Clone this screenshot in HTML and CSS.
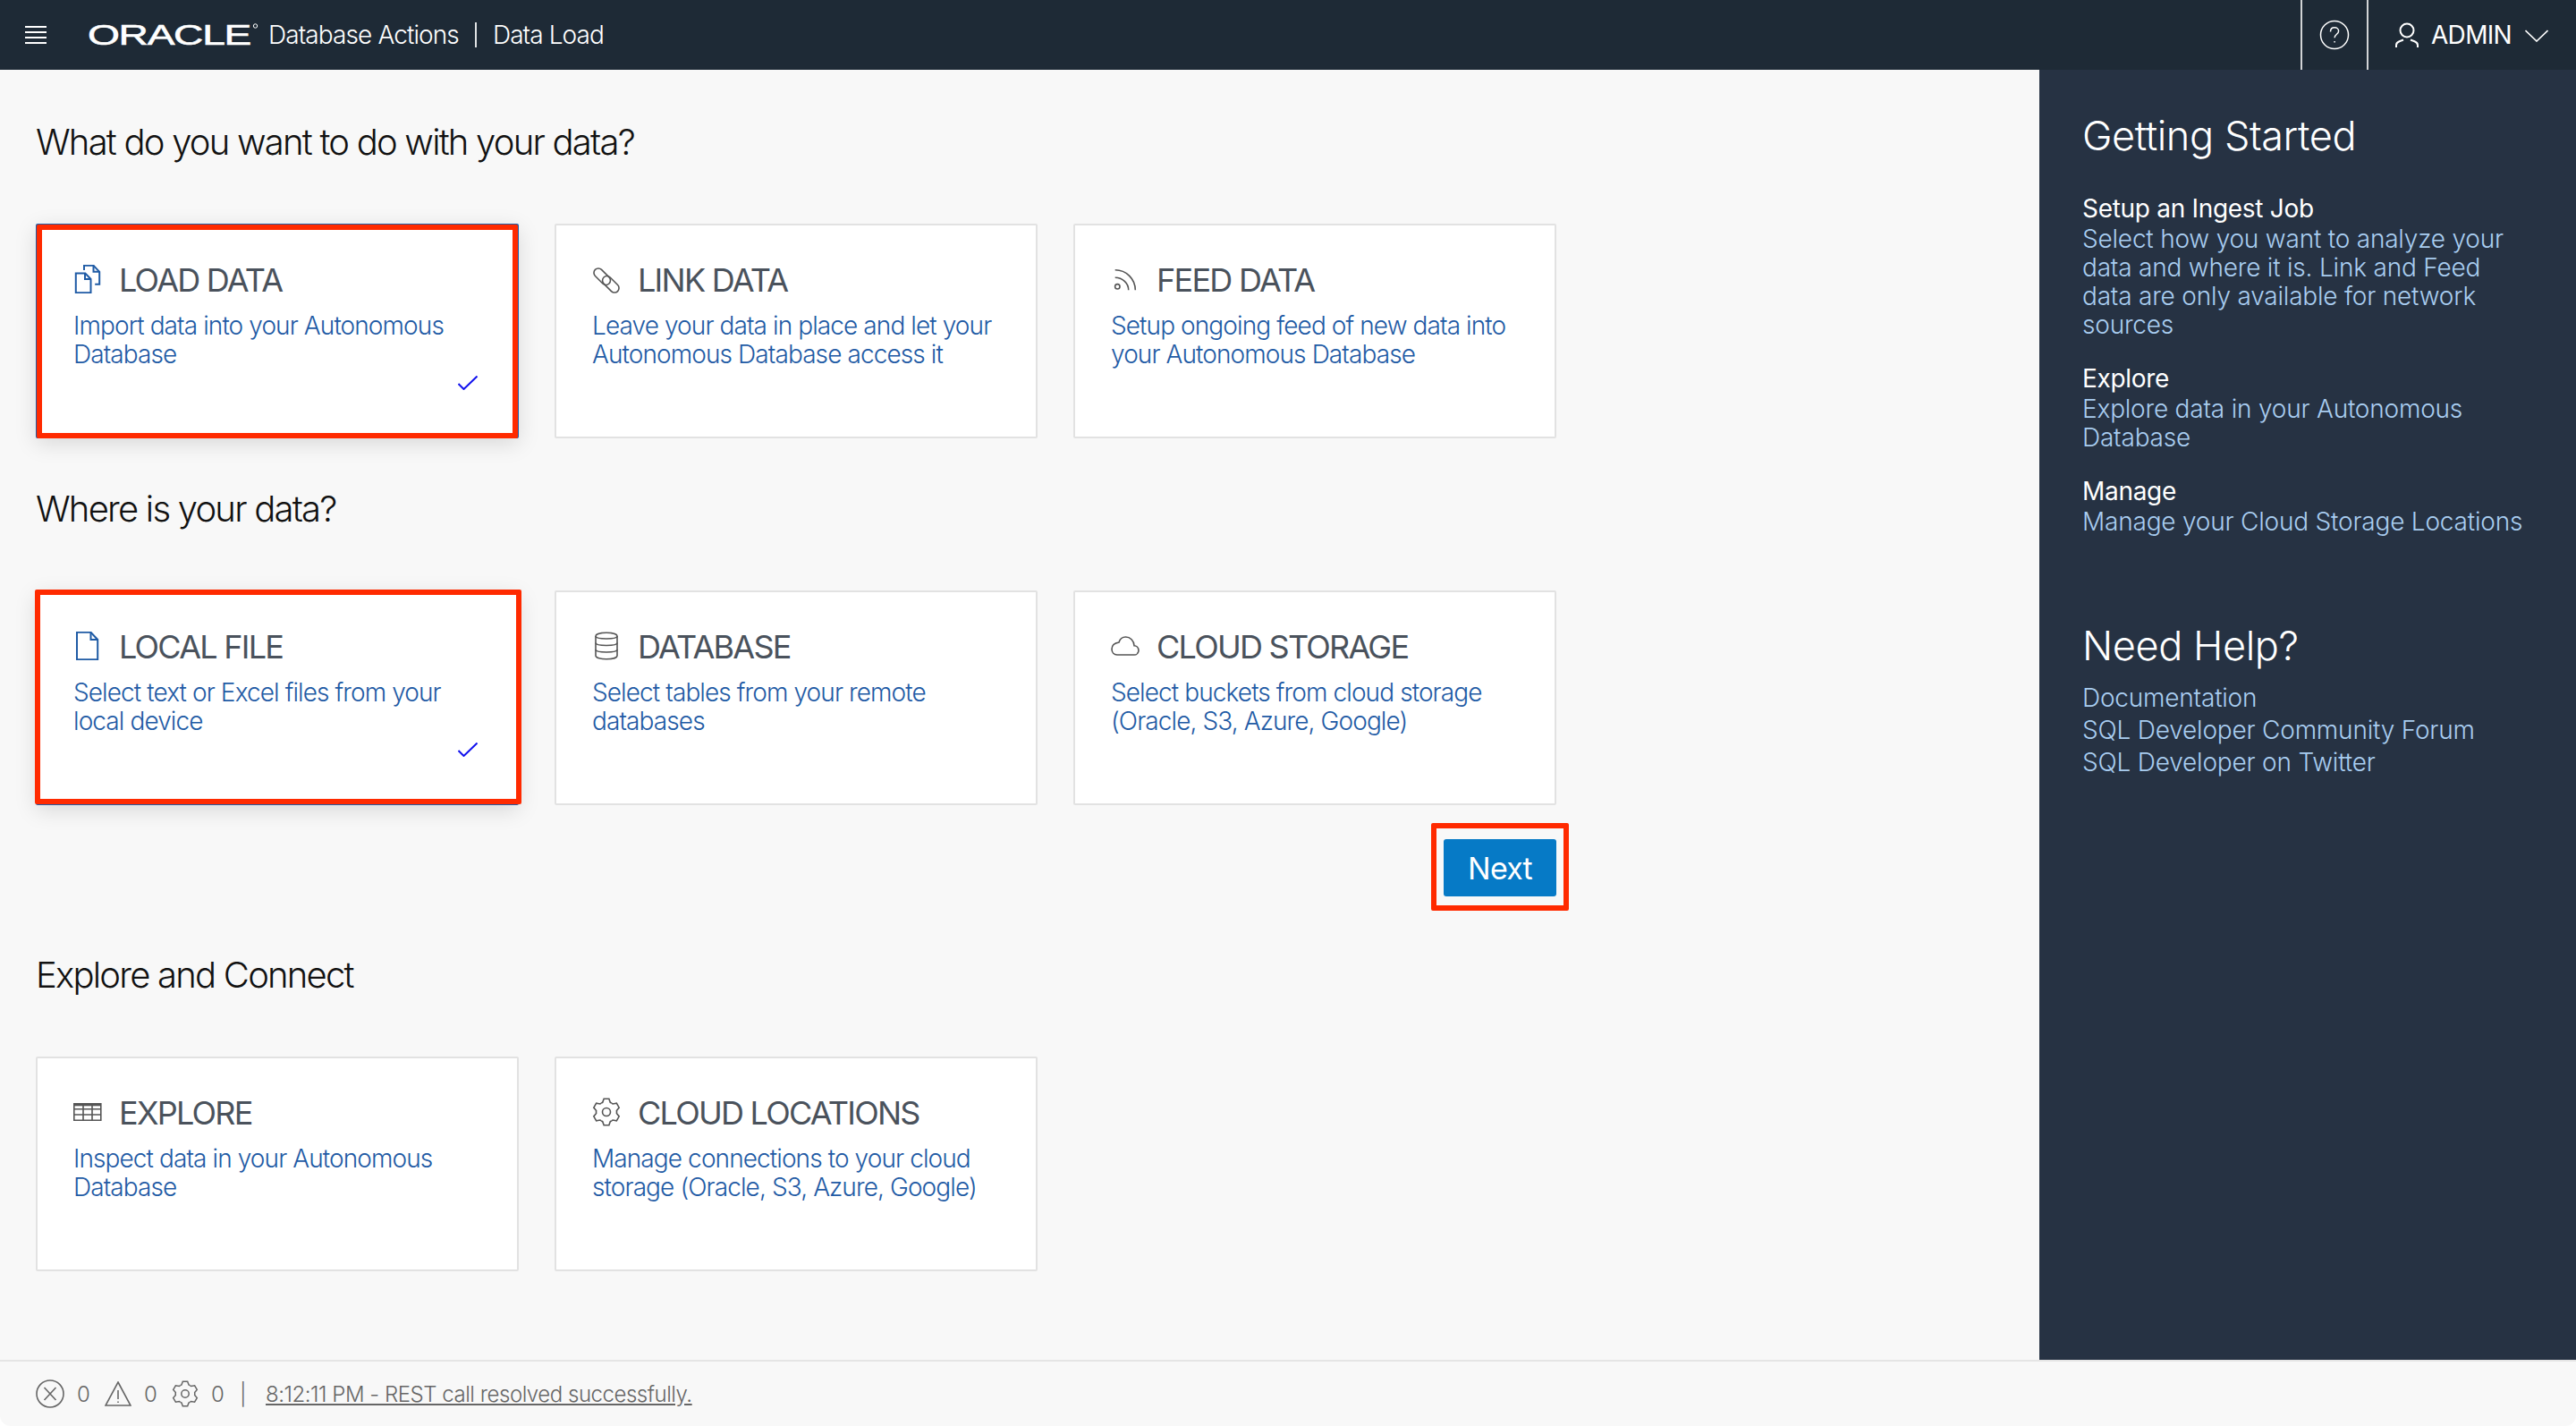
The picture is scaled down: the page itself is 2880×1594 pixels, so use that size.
FILE: index.html
```html
<!DOCTYPE html>
<html lang="en">
<head>
  <meta charset="UTF-8" />
  <title>Data Load</title>
  <link rel="stylesheet" href="styles.css">
</head>
<body>
  <svg class="defs">
    <symbol id="gear" viewBox="0 0 32 32">
      <circle cx="16" cy="16" r="4.500"/>
      <path id="tooth" d="M10.250 6.040L11.690 5.340 13.140 1.280H18.860L20.310 5.340 21.750 6.040"/>
      <use href="#tooth" transform="rotate(60 16 16)"/>
      <use href="#tooth" transform="rotate(120 16 16)"/>
      <use href="#tooth" transform="rotate(180 16 16)"/>
      <use href="#tooth" transform="rotate(240 16 16)"/>
      <use href="#tooth" transform="rotate(300 16 16)"/>
    </symbol>
  </svg>

  <div class="app">

    <header class="topbar">
      <svg class="menu-icon" width="24" height="20" viewBox="0 0 24 20"><path d="M0 1h24M0 7h24M0 13h24M0 19h24"/></svg>
      <svg class="oracle-logo" width="192" height="36" viewBox="0 0 192 36"><text x="0" y="29" textLength="182" lengthAdjust="spacingAndGlyphs">ORACLE</text><circle cx="187.500" cy="8" r="2.200"/></svg>
      <span class="app-name">Database Actions</span>
      <span class="app-sep"></span>
      <span class="app-page">Data Load</span>
      <div class="topbar-right">
        <div class="help-box">
          <svg width="34" height="34" viewBox="0 0 34 34"><circle cx="17" cy="17" r="15.500"/><path d="M12.500 13.500c0-3 2-4.700 4.600-4.700s4.500 1.700 4.500 4c0 3.500-4.500 3.500-4.500 7.500"/><path d="M17.100 24v1.600"/></svg>
        </div>
        <div class="user-box">
          <svg width="26" height="29" viewBox="0 0 26 29"><circle cx="13" cy="9" r="7.500"/><path d="M1 28v-2.500c0-2 1.200-3.300 3.500-4.200L9 19.500M25 28v-2.500c0-2-1.200-3.300-3.500-4.200L17 19.500"/></svg>
          <span>ADMIN</span>
          <svg class="chevron" width="26" height="14" viewBox="0 0 26 14"><path d="M.5 1l12.500 12L25.500 1"/></svg>
        </div>
      </div>
    </header>

    <div class="body-row">
      <main class="content">

        <h2 class="section-title">What do you want to do with your data?</h2>
        <div class="card-grid">
          <div class="card selected">
            <div class="card-head">
              <svg class="icon" width="32" height="32" viewBox="-2 0 32 32"><path d="M10 6V.8h10.500l6.700 7v14h-5"/><path d="M20.500.8v7h6.700"/><path d="M.8 9.500h10.500l6.200 6.500v15.200H.8z"/><path d="M11 9.500V16h6.500"/></svg>
              <span class="card-title">LOAD DATA</span>
            </div>
            <p class="card-desc">Import data into your Autonomous Database</p>
            <svg class="check" width="22" height="16" viewBox="0 0 22 16"><path d="M.5 9l6 6L21.500.5"/></svg>
            <span class="callout"></span>
          </div>
          <div class="card">
            <div class="card-head">
              <svg class="icon" width="32" height="32" viewBox="0 0 32 32"><rect x="0.200" y="8.200" width="22" height="10" rx="5" transform="rotate(45 11.200 13.200)"/><rect x="9.800" y="16.800" width="22" height="10" rx="5" transform="rotate(45 20.800 21.800)"/></svg>
              <span class="card-title">LINK DATA</span>
            </div>
            <p class="card-desc">Leave your data in place and let your Autonomous Database access it</p>
          </div>
          <div class="card">
            <div class="card-head">
              <svg class="icon" width="32" height="32" viewBox="0 0 32 32"><circle cx="7.300" cy="24.300" r="2.700"/><path d="M4.700 5.700A22.600 22.600 0 0 1 27.300 28.300"/><path d="M4.700 14.300A15 14 0 0 1 19.700 28.300"/></svg>
              <span class="card-title">FEED DATA</span>
            </div>
            <p class="card-desc">Setup ongoing feed of new data into your Autonomous Database</p>
          </div>
        </div>

        <h2 class="section-title">Where is your data?</h2>
        <div class="card-grid">
          <div class="card selected">
            <div class="card-head">
              <svg class="icon" width="32" height="32" viewBox="-2 0 32 32"><path d="M2 .8h15.500l7.700 8.200v22.200H2z"/><path d="M17.500.8V9h7.700"/></svg>
              <span class="card-title">LOCAL FILE</span>
            </div>
            <p class="card-desc">Select text or Excel files from your local device</p>
            <svg class="check" width="22" height="16" viewBox="0 0 22 16"><path d="M.5 9l6 6L21.500.5"/></svg>
            <span class="callout wide"></span>
          </div>
          <div class="card">
            <div class="card-head">
              <svg class="icon" width="32" height="32" viewBox="-3 0 32 32"><path d="M1 5c0-5 24-5 24 0v22c0 5-24 5-24 0z"/><path d="M1 5c0 4 24 4 24 0M1 12.500c0 4 24 4 24 0M1 20c0 4 24 4 24 0"/></svg>
              <span class="card-title">DATABASE</span>
            </div>
            <p class="card-desc">Select tables from your remote databases</p>
          </div>
          <div class="card">
            <div class="card-head">
              <svg class="icon" width="32" height="32" viewBox="0 0 32 32"><path d="M7 26h19c3 0 5-2.300 5-5s-2-5-5-5.200C25.800 10 21.500 6 16.500 6 12.800 6 10 8.700 9 12 4.500 12.800 1 15.500 1 19.500S3.500 26 7 26z"/></svg>
              <span class="card-title">CLOUD STORAGE</span>
            </div>
            <p class="card-desc">Select buckets from cloud storage (Oracle, S3, Azure, Google)</p>
          </div>
        </div>

        <div class="next-row">
          <button class="next-btn">Next<span class="callout"></span></button>
        </div>

        <h2 class="section-title explore-title">Explore and Connect</h2>
        <div class="card-grid">
          <div class="card">
            <div class="card-head">
              <svg class="icon" width="32" height="32" viewBox="0 0 32 32"><path d="M.8 6.800h30v18.400H.8z"/><path class="thick" d="M.8 7.800h30"/><path d="M.8 12.800h30M.8 19h30M11 7v18M21 7v18"/></svg>
              <span class="card-title">EXPLORE</span>
            </div>
            <p class="card-desc">Inspect data in your Autonomous Database</p>
          </div>
          <div class="card">
            <div class="card-head">
              <svg class="icon" width="32" height="32"><use href="#gear"/></svg>
              <span class="card-title">CLOUD LOCATIONS</span>
            </div>
            <p class="card-desc">Manage connections to your cloud storage (Oracle, S3, Azure, Google)</p>
          </div>
        </div>

      </main>

      <aside class="sidebar">
        <h3 class="side-title">Getting Started</h3>
        <div class="side-item">
          <div class="side-label">Setup an Ingest Job</div>
          <div class="side-text">Select how you want to analyze your data and where it is. Link and Feed data are only available for network sources</div>
        </div>
        <div class="side-item">
          <div class="side-label">Explore</div>
          <div class="side-text">Explore data in your Autonomous Database</div>
        </div>
        <div class="side-item">
          <div class="side-label">Manage</div>
          <div class="side-text">Manage your Cloud Storage Locations</div>
        </div>
        <h3 class="side-title help-title">Need Help?</h3>
        <div class="side-links">
          <div>Documentation</div>
          <div>SQL Developer Community Forum</div>
          <div>SQL Developer on Twitter</div>
        </div>
      </aside>
    </div>

    <footer class="statusbar">
      <svg width="32" height="32" viewBox="0 0 32 32"><circle cx="16" cy="16" r="15"/><path d="M9.500 9l13 14M22.500 9l-13 14"/></svg>
      <span class="count">0</span>
      <svg class="warn-icon" width="30" height="28" viewBox="0 0 30 28"><path d="M15 1l14 26H1z"/><path d="M15 10v10M15 22.500v1.500"/></svg>
      <span class="count">0</span>
      <svg class="gear-icon" width="30" height="32"><use href="#gear"/></svg>
      <span class="count">0</span>
      <span class="status-sep">|</span>
      <span class="status-msg">8:12:11 PM - REST call resolved successfully.</span>
    </footer>

  </div>
</body>
</html>
```

FILE: styles.css
```css
* {
  box-sizing: border-box;
}

html, body {
  margin: 0;
  padding: 0;
  background: #fff;
}

body {
  font-family: Inter, "Liberation Sans", sans-serif;
  font-weight: 300;
}

svg {
  display: block;
  fill: none;
  flex: none;
}

.defs {
  width: 0;
  height: 0;
  position: absolute;
}

.app {
  width: 2880px;
  height: 1594px;
  display: flex;
  flex-direction: column;
  overflow: hidden;
}

/* top bar */
.topbar {
  height: 78px;
  flex: none;
  background: #1e2a36;
  color: #fff;
  display: flex;
  align-items: center;
  padding-left: 28px;
  font-size: 28px;
  letter-spacing: -0.9px;
}

.menu-icon {
  stroke: #fff;
  stroke-width: 2;
  margin-right: 46px;
}

.oracle-logo {
  margin-right: 10px;
}

.oracle-logo text {
  font-family: "Liberation Sans", sans-serif;
  font-size: 32px;
  fill: #fff;
  stroke: #fff;
  stroke-width: 0.6;
}

.oracle-logo circle {
  stroke: #fff;
  stroke-width: 1;
}

.app-sep {
  width: 2px;
  height: 28px;
  background: #dfe1e3;
  margin: 0 18px;
}

.topbar-right {
  margin-left: auto;
  height: 100%;
  display: flex;
}

.help-box {
  width: 76px;
  height: 100%;
  border-left: 2px solid #d2d4d6;
  border-right: 2px solid #d2d4d6;
  display: flex;
  align-items: center;
  justify-content: center;
  stroke: #fff;
}

.help-box svg {
  stroke-width: 1.5;
}

.user-box {
  width: 232px;
  display: flex;
  align-items: center;
  padding-left: 30px;
  stroke: #fff;
  font-weight: 400;
  letter-spacing: -0.7px;
}

.user-box svg {
  stroke-width: 2;
  margin-right: 14px;
}

.user-box .chevron {
  stroke-width: 1.6;
  margin: 2px 0 0 15px;
}

/* page body */
.body-row {
  flex: 1;
  min-height: 0;
  display: flex;
}

.content {
  flex: 1;
  background: #f8f8f8;
  padding: 57px 0 0 40px;
}

.section-title {
  margin: 0 0 67px;
  font-size: 40px;
  line-height: 48px;
  font-weight: 300;
  color: #111;
  letter-spacing: -1.78px;
}

.card-grid {
  display: grid;
  grid-template-columns: repeat(3, 540px);
  gap: 40px;
  margin-bottom: 55px;
}

.card {
  position: relative;
  height: 240px;
  background: #fff;
  border: 2px solid #e2e2e2;
  border-radius: 2px;
  padding: 39px 40px 0;
  display: flex;
  flex-direction: column;
}

.card.selected {
  border-color: #1f5ba5;
  box-shadow: 0 6px 24px rgba(0, 0, 0, 0.13);
}

.card-head {
  display: flex;
  align-items: center;
  height: 44px;
}

.card-head .icon {
  stroke: #555;
  stroke-width: 1.6;
  margin: -2px 19px 0 0;
}

.card.selected .icon {
  stroke: #1f5ba5;
  stroke-width: 2;
}

.icon .thick {
  stroke-width: 3;
}

.card-title {
  font-size: 36px;
  line-height: 44px;
  font-weight: 400;
  color: #4a525c;
  letter-spacing: -1.75px;
}

.card-desc {
  margin: 13px 0 0;
  font-size: 28px;
  line-height: 32px;
  color: #1f5ba5;
  letter-spacing: -0.9px;
}

.check {
  stroke: #1212ee;
  stroke-width: 2;
  align-self: flex-end;
  margin: 8px 4px 0 0;
}

/* red annotation boxes drawn over the screenshot */
.callout {
  position: absolute;
  top: -1px;
  left: -1px;
  right: -1px;
  bottom: -2px;
  border: 6px solid #ff2a00;
  border-radius: 2px;
  pointer-events: none;
}

.callout.wide {
  top: -3px;
  left: -3px;
  right: -5px;
  bottom: -1px;
}

.next-row {
  width: 1700px;
  height: 64px;
  margin-top: -17px;
  display: flex;
  justify-content: flex-end;
}

.next-btn {
  position: relative;
  width: 126px;
  height: 64px;
  border: none;
  border-radius: 3px;
  background: #067ac6;
  color: #fff;
  font-family: inherit;
  font-size: 34px;
  font-weight: 400;
  letter-spacing: -0.8px;
}

.next-btn .callout {
  top: -18px;
  left: -14px;
  right: -14px;
  bottom: -16px;
}

.explore-title {
  margin-top: 64px;
}

/* right panel */
.sidebar {
  width: 600px;
  flex: none;
  background: #263243;
  color: #fff;
  padding: 48px 52px 0 48px;
}

.side-title {
  margin: 0 0 39px;
  font-size: 45px;
  line-height: 52px;
  font-weight: 300;
  letter-spacing: -0.4px;
}

.side-item {
  margin-bottom: 28px;
}

.side-label {
  font-size: 28px;
  line-height: 32px;
  font-weight: 400;
  letter-spacing: -0.3px;
  margin-bottom: 2px;
}

.side-text, .side-links {
  font-size: 28px;
  line-height: 32px;
  color: #a9cdf0;
  letter-spacing: -0.2px;
}

.help-title {
  margin: 97px 0 14px;
}

.side-links {
  line-height: 36px;
}

/* bottom status bar */
.statusbar {
  height: 74px;
  flex: none;
  background: #f8f8f8;
  border-top: 2px solid #e5e5e5;
  border-radius: 0 0 12px 12px;
  display: flex;
  align-items: center;
  padding-left: 40px;
  color: #666;
  font-size: 24px;
  letter-spacing: -0.47px;
  stroke: #666;
}

.statusbar svg {
  stroke-width: 1.6;
}

.count {
  width: 12px;
  margin: 0 19px 0 14px;
}

.status-sep {
  margin: 0 22px 0 1px;
}

.status-msg {
  text-decoration: underline;
}
```
